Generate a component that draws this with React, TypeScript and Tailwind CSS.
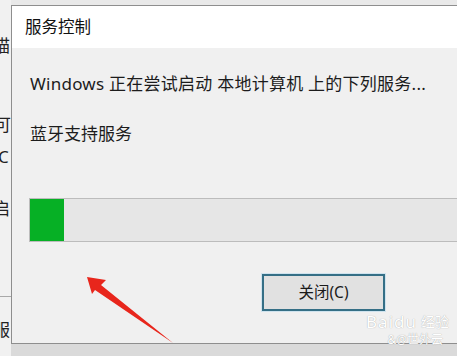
import React from "react";

const font = { fontFamily: '"Noto Sans", "Noto Sans CJK SC", sans-serif' };

export default function App() {
  return (
    <div
      className="relative w-[457px] h-[356px] overflow-hidden bg-[#e4e4e4] flex text-[#1c1c1c]"
      style={font}
    >
      {/* background window strip */}
      <div className="w-[11px] h-full shrink-0 bg-[#f1f1f1] overflow-hidden flex flex-col text-[17px] leading-[17px] text-[#222]">
        <div className="mt-[37px] ml-[-7px] whitespace-nowrap">描</div>
        <div className="mt-[62px] ml-[-6px] whitespace-nowrap">可</div>
        <div className="mt-[15px] ml-[-2px] whitespace-nowrap">C</div>
        <div className="mt-[35px] ml-[-7px] whitespace-nowrap">启</div>
        <div className="mt-[79px] h-px w-full bg-[#a9a9a9]" />
        <div className="mt-[24px] ml-[-7px] whitespace-nowrap">服</div>
      </div>

      {/* dialog column */}
      <div className="flex-1 flex flex-col min-w-0">
        <div className="h-[5px] shrink-0 bg-[#e9e9e9]" />
        <div className="h-[339px] shrink-0 flex flex-col border-t border-l border-b border-[#8e8e8e]">
          <div className="h-[42px] shrink-0 bg-white flex items-center pl-[13px] text-[16.5px] text-[#111]">
            服务控制
          </div>
          <div className="flex-1 bg-[#f0f0f0] flex flex-col">
            <div className="mt-[24px] ml-[18px] h-[24px] leading-[24px] text-[17px] tracking-[0.25px] whitespace-nowrap">
              Windows 正在尝试启动 本地计算机 上的下列服务...
            </div>
            <div className="mt-[26px] ml-[18px] h-[24px] leading-[24px] text-[17px] whitespace-nowrap">
              蓝牙支持服务
            </div>
            <div className="mt-[52px] ml-[17px] w-[450px] h-[44px] shrink-0 border border-[#bcbcbc] bg-[#e6e6e6] flex">
              <div className="w-[34px] h-full bg-[#06b025]" />
            </div>
            <div className="mt-[32px] ml-[250px] w-[123px] h-[37px] shrink-0 border-2 border-[#356f86] bg-[#e1e1e1] flex items-center justify-center text-[15.5px] text-[#1a1a1a] shadow-[0_0_0_1px_#cfe3ee]">
              关闭(C)
            </div>
          </div>
        </div>
        <div className="flex-1 bg-[#dadada]" />
      </div>

      {/* red arrow annotation */}
      <svg
        className="absolute left-0 top-0 pointer-events-none"
        width="457"
        height="356"
        viewBox="0 0 457 356"
      >
        <polygon
          points="87,277 106,280 101,285 173,343 95,290 92,294"
          fill="#e8261c"
        />
      </svg>

      {/* watermark */}
      <div className="absolute left-[345px] top-[312px] w-[104px] flex flex-col items-end pointer-events-none">
        <div className="h-[20px] flex items-center gap-[2px] text-white [text-shadow:0_0_1px_#9a9a9a]">
          <span className="text-[17px] leading-[20px] tracking-[1px]">Baidu</span>
          <span className="text-[14px] leading-[20px] ml-[2px]">经验</span>
        </div>
        <div className="h-[16px] mr-[6px] flex items-center gap-[2px] text-white text-[12px] leading-[16px] [text-shadow:0_0_1px_#8a8a8a]">
          <span>&amp;@世外云</span>
        </div>
      </div>
    </div>
  );
}
